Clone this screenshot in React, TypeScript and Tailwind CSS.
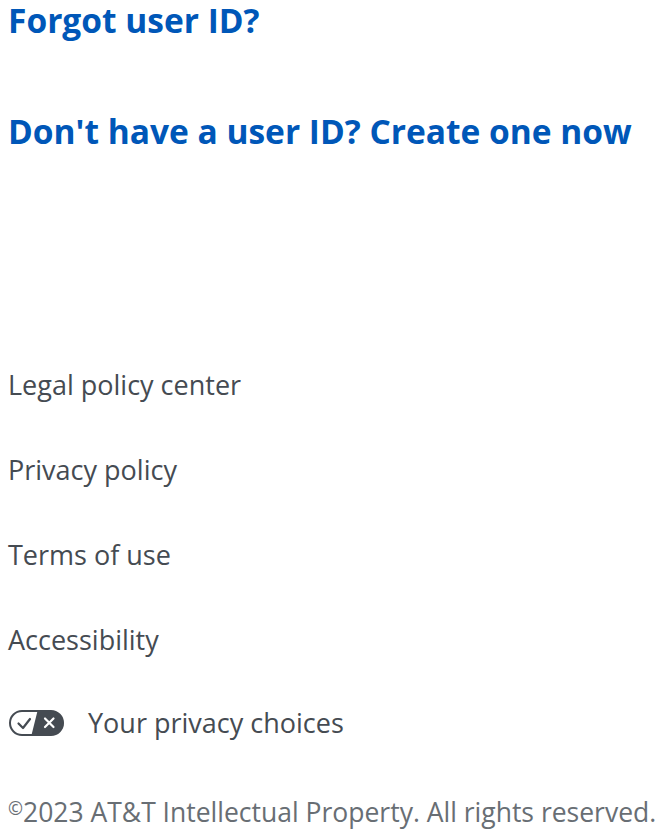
import React from "react";

function PrivacyIcon() {
  return (
    <svg width="57" height="28" viewBox="0 0 56 28" fill="none">
      <rect x="1.5" y="2" width="53" height="24" rx="12" stroke="#454b52" strokeWidth="2" fill="#fff" />
      <path d="M29 2 H43 A12 12 0 0 1 43 26 H23 Z" fill="#454b52" />
      <path d="M10 14.5 L14.5 19 L21.5 10" stroke="#454b52" strokeWidth="2.2" strokeLinecap="round" strokeLinejoin="round" />
      <path d="M36.5 9.5 L45 18 M45 9.5 L36.5 18" stroke="#fff" strokeWidth="2.2" strokeLinecap="round" />
    </svg>
  );
}

export default function App() {
  const links = ["Legal policy center", "Privacy policy", "Terms of use", "Accessibility"];
  return (
    <div
      className="w-[670px] h-[830px] bg-white overflow-hidden pl-2 flex flex-col"
      style={{ fontFamily: '"Open Sans", "Noto Sans", sans-serif' }}
    >
      <a className="text-[#0057b8] font-bold text-[33.5px] leading-[46px] -mt-[3px] whitespace-nowrap">Forgot user ID?</a>
      <a className="text-[#0057b8] font-bold text-[33.5px] leading-[40px] mt-[68px] whitespace-nowrap">
        Don't have a user ID? Create one now
      </a>
      <div className="flex flex-col mt-[216px] gap-[49px] text-[#454b52] text-[27px] leading-[36px]">
        {links.map((l) => (
          <a key={l} className="whitespace-nowrap">{l}</a>
        ))}
      </div>
      <a className="flex items-center gap-[23px] mt-[47px] h-[36px] text-[#454b52] text-[27px] leading-[36px]">
        <PrivacyIcon />
        <span className="whitespace-nowrap">Your privacy choices</span>
      </a>
      <p className="text-[#686e74] text-[26.5px] leading-[36px] mt-[53px] whitespace-nowrap">
        <span className="text-[18px] align-top leading-[28px]">©</span>2023 AT&amp;T Intellectual Property. All rights reserved.
      </p>
    </div>
  );
}
